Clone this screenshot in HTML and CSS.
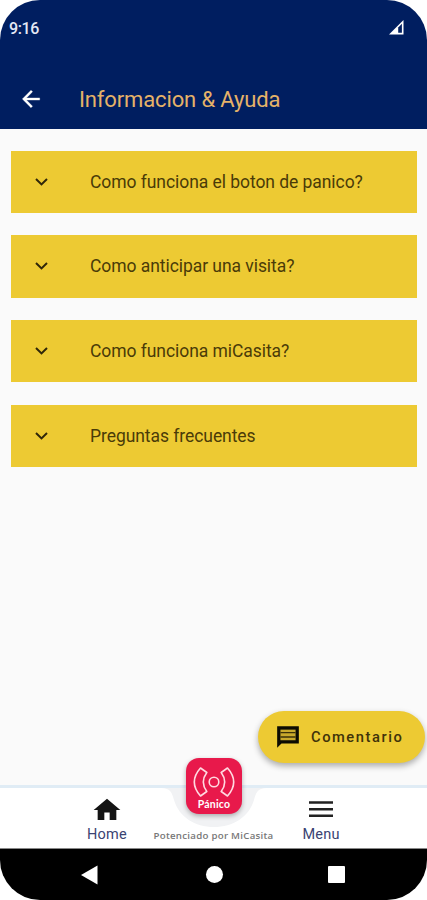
FILE: index.html
```html
<!DOCTYPE html>
<html lang="es">
<head>
    <meta charset="UTF-8">
    <meta name="viewport" content="width=device-width, initial-scale=1.0">
    <title>Informacion &amp; Ayuda</title>
    <link rel="stylesheet" href="styles.css">
</head>
<body>
    <div class="phone">
        <header class="header">
            <div class="status-bar">
                <span class="clock">9:16</span>
                <svg class="signal" width="15" height="15" viewBox="0 0 15 15">
                    <path d="M0 14.5L14.5 0V14.5Z" fill="#fff"/>
                    <path d="M9.2 12.8V7.4L12.9 3.8V12.8Z" fill="#001e60"/>
                </svg>
            </div>
            <div class="title-bar">
                <svg class="back" width="26" height="26" viewBox="0 0 24 24">
                    <path d="M20 11H7.83l5.59-5.59L12 4l-8 8 8 8 1.41-1.41L7.83 13H20v-2z" fill="#fff" stroke="#fff" stroke-width=".3"/>
                </svg>
                <h1>Informacion &amp; Ayuda</h1>
            </div>
        </header>

        <main class="content">
            <div class="question">
                <svg class="chevron" width="13" height="8" viewBox="0 0 13 8"><path d="M1 1L6.5 6.4L12 1"/></svg>
                <span>Como funciona el boton de panico?</span>
            </div>
            <div class="question">
                <svg class="chevron" width="13" height="8" viewBox="0 0 13 8"><path d="M1 1L6.5 6.4L12 1"/></svg>
                <span>Como anticipar una visita?</span>
            </div>
            <div class="question">
                <svg class="chevron" width="13" height="8" viewBox="0 0 13 8"><path d="M1 1L6.5 6.4L12 1"/></svg>
                <span>Como funciona miCasita?</span>
            </div>
            <div class="question">
                <svg class="chevron" width="13" height="8" viewBox="0 0 13 8"><path d="M1 1L6.5 6.4L12 1"/></svg>
                <span>Preguntas frecuentes</span>
            </div>
            <button class="comment">
                <svg width="26" height="26" viewBox="0 0 24 24">
                    <path d="M22 2H2v20l4-4h16z" fill="#0d0b02"/>
                    <path d="M5 5.2h14v9.8h-14z" fill="#c9a92c"/>
                    <path d="M5 8h14M5 12h14" stroke="#3d3208" stroke-width="1.2"/>
                </svg>
                <span>Comentario</span>
            </button>
        </main>

        <nav class="tabs">
            <svg class="notch" width="106" height="44" viewBox="0 0 106 44">
                <path d="M0 3C10 3 11 8 13 15C18 32 34 42 53 42S88 32 93 15C95 8 96 3 106 3Z" fill="#f1f2f4"/>
            </svg>
            <div class="tab tab-home">
                <svg width="32" height="30" viewBox="0 0 24 24" preserveAspectRatio="none">
                    <path d="M10 20v-6h4v6h5v-8h3L12 3 2 12h3v8z" fill="#141414"/>
                </svg>
                <span>Home</span>
            </div>
            <div class="powered">Potenciado por MiCasita</div>
            <div class="tab tab-menu">
                <svg width="32" height="30" viewBox="0 0 32 30">
                    <path d="M4 7.5H28M4 14.2H28M4 20.7H28" stroke="#222" stroke-width="2.4"/>
                </svg>
                <span>Menu</span>
            </div>
            <div class="panic">
                <svg width="42" height="32" viewBox="0 0 42 32" fill="none" stroke="#ffd9e0" stroke-width="1.6" stroke-linejoin="round">
                    <circle cx="21" cy="16" r="4.8"/>
                    <path d="M7.500 2L13.800 6.500Q6.800 16 13.800 25.500L7.500 30Q-4.900 16 7.500 2Z"/>
                    <path d="M34.500 2L28.200 6.500Q35.200 16 28.200 25.500L34.500 30Q46.900 16 34.500 2Z"/>
                </svg>
                <span>Pánico</span>
            </div>
        </nav>

        <footer class="system-nav">
            <svg width="17" height="20" viewBox="0 0 17 20"><path d="M0 10L16.5 .5V19.5Z" fill="#fff"/></svg>
            <span class="nav-circle"></span>
            <span class="nav-square"></span>
        </footer>
    </div>
</body>
</html>
```

FILE: styles.css
```css
* {
    box-sizing: border-box;
}
body {
    margin: 0;
    background-color: #fff;
    font-family: Roboto, "Noto Sans", sans-serif;
}
.phone {
    display: flex;
    flex-direction: column;
    width: 427px;
    height: 900px;
    border-radius: 40px;
    overflow: hidden;
    background-color: #fafafa;
}
.header {
    height: 128.5px;
    background-color: #001e60;
}
.status-bar {
    display: flex;
    justify-content: space-between;
    height: 70px;
    padding: 20px 23px 0 9px;
}
.clock {
    font-size: 16px;
    line-height: 17px;
    font-weight: 500;
    letter-spacing: -0.4px;
    color: #e4e9f5;
}
.title-bar {
    display: flex;
    align-items: center;
    height: 58px;
    padding-left: 18px;
}
.title-bar h1 {
    margin: 1px 0 0 35px;
    font-size: 22px;
    font-weight: 400;
    line-height: 26px;
    letter-spacing: -0.14px;
    color: #e5b268;
}
.content {
    position: relative;
    flex: 1;
    display: flex;
    flex-direction: column;
    gap: 22.4px;
    padding: 22px 10.5px 0 11px;
}
.question {
    display: flex;
    align-items: center;
    gap: 42px;
    height: 62.4px;
    padding-left: 24px;
    background-color: #edca33;
    font-size: 17.5px;
    letter-spacing: -0.06px;
    color: #4a3b08;
}
.chevron {
    fill: none;
    stroke: #30270a;
    stroke-width: 2;
}
.comment {
    position: absolute;
    right: 2px;
    bottom: 22px;
    z-index: 2;
    display: flex;
    align-items: center;
    gap: 10px;
    width: 167px;
    height: 52px;
    padding: 0 0 0 17px;
    border: none;
    border-radius: 26px;
    background-color: #edca33;
    box-shadow: 0 3px 6px rgba(0, 0, 0, 0.32);
    font-family: inherit;
    font-size: 14.7px;
    font-weight: 500;
    letter-spacing: 1.55px;
    color: #40330a;
}
.tabs {
    position: relative;
    display: flex;
    height: 64.5px;
    border-top: 3px solid #e0ecf5;
    border-bottom: 1px solid #888;
    background-color: #fff;
}
.tab {
    display: flex;
    flex-direction: column;
    align-items: center;
    width: 60px;
    padding-top: 7px;
    font-size: 14.5px;
    line-height: 17px;
    letter-spacing: 0.2px;
    color: #3a4372;
}
.tab span {
    margin-top: 1px;
}
.tab-home {
    margin-left: 77px;
}
.tab-menu {
    margin-left: 1px;
}
.powered {
    width: 153px;
    padding-top: 41px;
    text-align: center;
    font-family: "Open Sans", sans-serif;
    font-size: 9.7px;
    font-weight: 600;
    line-height: 13px;
    letter-spacing: 0.26px;
    color: #777;
}
.notch {
    position: absolute;
    left: 161px;
    top: -3px;
}
.panic {
    position: absolute;
    left: 186px;
    top: -30px;
    display: flex;
    flex-direction: column;
    align-items: center;
    width: 56px;
    height: 56px;
    padding-top: 8px;
    border-radius: 13px;
    background-color: #e8194b;
    box-shadow: 0 2px 5px rgba(0, 0, 0, 0.3);
    font-family: Lato, sans-serif;
    font-size: 10.5px;
    font-weight: 700;
    line-height: 12px;
    letter-spacing: 0.2px;
    color: #fff;
}
.system-nav {
    display: flex;
    align-items: center;
    height: 51px;
    padding-left: 81px;
    background-color: #000;
}
.nav-circle {
    width: 17px;
    height: 17px;
    margin-left: 107.5px;
    border-radius: 50%;
    background-color: #fff;
}
.nav-square {
    width: 17px;
    height: 17px;
    margin-left: 105.5px;
    border-radius: 1px;
    background-color: #fff;
}
```
